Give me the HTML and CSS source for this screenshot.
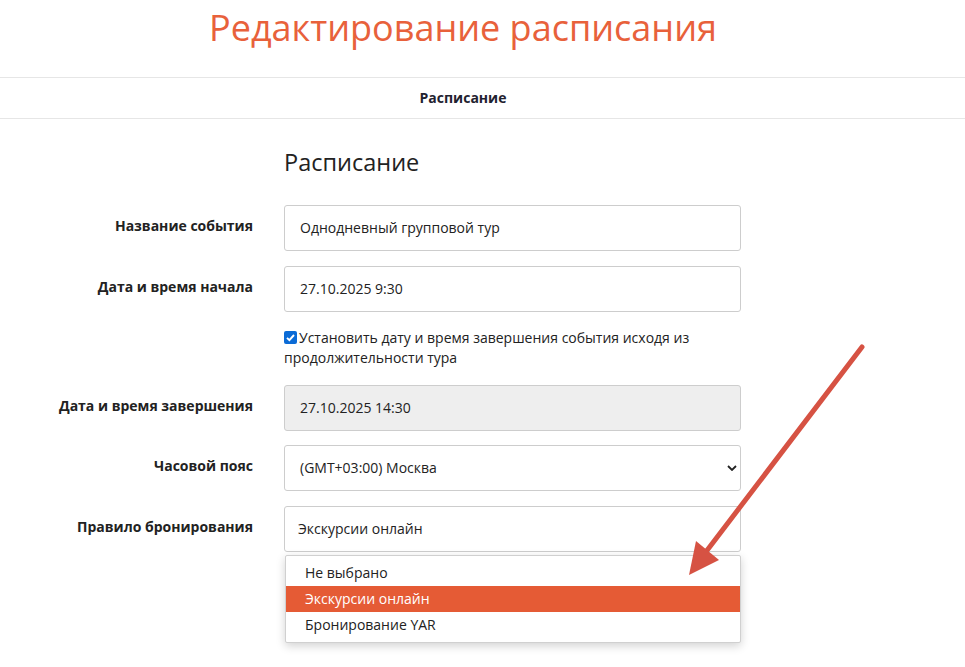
FILE: index.html
```html
<!DOCTYPE html>
<html lang="ru">
<head>
<meta charset="utf-8">
<title>Редактирование расписания</title>
<link rel="stylesheet" href="styles.css">
</head>
<body>
<div class="page">
  <h1 class="title">Редактирование расписания</h1>
  <nav class="tabs"><span class="tab">Расписание</span></nav>
  <section class="form">
    <h2 class="section-title">Расписание</h2>
    <div class="row">
      <label class="label">Название события</label>
      <div class="field">Однодневный групповой тур</div>
    </div>
    <div class="row">
      <label class="label">Дата и время начала</label>
      <div class="field">27.10.2025 9:30</div>
    </div>
    <div class="row">
      <span class="label"></span>
      <div class="check-text"><span class="checkbox"><svg viewBox="0 0 13 13" width="13" height="13"><rect x="0" y="0" width="13" height="13" rx="2" fill="#0b6bd6"/><path d="M3 6.8 L5.4 9.2 L10 4" fill="none" stroke="#fff" stroke-width="1.9"/></svg></span>Установить дату и время завершения события исходя из продолжительности тура</div>
    </div>
    <div class="row row-tight">
      <label class="label">Дата и время завершения</label>
      <div class="field disabled">27.10.2025 14:30</div>
    </div>
    <div class="row">
      <label class="label">Часовой пояс</label>
      <div class="field select tz"><span>(GMT+03:00) Москва</span><svg class="chev" viewBox="0 0 10 6" width="10" height="6"><path d="M1 1 L5 5 L9 1" fill="none" stroke="#222" stroke-width="1.8"/></svg></div>
    </div>
    <div class="row">
      <label class="label">Правило бронирования</label>
      <div class="select-wrap">
        <div class="field select rule"><span>Экскурсии онлайн</span><span class="tick"></span></div>
        <ul class="dropdown">
          <li>Не выбрано</li>
          <li class="active">Экскурсии онлайн</li>
          <li>Бронирование YAR</li>
        </ul>
      </div>
    </div>
  </section>
  <svg class="annot" width="965" height="667" viewBox="0 0 965 667">
    <line x1="862" y1="347" x2="702" y2="557" stroke="#d65243" stroke-width="5" stroke-linecap="round"/>
    <polygon points="689,575 696,541 719,560" fill="#d65243"/>
  </svg>
</div>
</body>
</html>
```
FILE: styles.css
```css
* { box-sizing: border-box; }
html, body { margin: 0; padding: 0; background: #fff; }
body {
  font-family: "Open Sans", "Noto Sans", sans-serif;
  color: #222;
  font-size: 14px;
}
.page { position: relative; width: 965px; height: 667px; overflow: hidden; }
.title {
  margin: 0;
  padding-top: 3px;
  height: 77px;
  text-align: center;
  font-weight: 400;
  font-size: 36px;
  line-height: 50px;
  color: #e8613b;
  padding-right: 39px;
}
.tabs {
  border-top: 1px solid #e6e6e6;
  border-bottom: 1px solid #e6e6e6;
  height: 42px;
  display: flex;
  justify-content: center;
  align-items: center;
  padding-right: 39px;
}
.tab { font-weight: 700; font-size: 14px; color: #1f2230; padding-bottom: 1px; }
.form { padding-top: 26px; }
.section-title {
  margin: 0 0 26px 284px;
  font-weight: 400;
  font-size: 23.5px;
  line-height: 34px;
  color: #222;
}
.row {
  display: grid;
  grid-template-columns: 253px 457px;
  column-gap: 31px;
  margin-bottom: 15px;
}
.row-tight { margin-bottom: 14px; }
.label {
  text-align: right;
  font-weight: 700;
  font-size: 14px;
  padding-top: 11px;
  color: #222;
}
.field {
  height: 46px;
  border: 1px solid #cdcdcd;
  border-radius: 3px;
  padding: 0 15px 2px;
  display: flex;
  align-items: center;
  font-size: 14px;
  color: #222;
  background: #fff;
}
.field.disabled { background: #eeeeee; }
.field.select { justify-content: space-between; padding-right: 3px; }
.field.tz { padding-left: 15px; }
.field.rule { padding-left: 13px; padding-right: 15px; }
.tick { width: 3px; height: 2px; background: #555; margin-top: 2px; }
.chev { flex: none; margin-top: 2px; }
.check-text { line-height: 20px; font-size: 14px; margin-top: 1px; margin-bottom: 2px; }
.checkbox { display: inline-block; vertical-align: -1px; margin-right: 2px; line-height: 0; }
.select-wrap { position: relative; }
.dropdown {
  position: absolute;
  left: 1px;
  top: 49px;
  width: 456px;
  margin: 0;
  padding: 4px 0 4px;
  list-style: none;
  background: #fff;
  border: 1px solid #d0d0d0;
  border-radius: 2px;
  box-shadow: 0 3px 10px rgba(0,0,0,0.18);
}
.dropdown li {
  height: 26px;
  line-height: 26px;
  padding-left: 19px;
  font-size: 14px;
  color: #222;
}
.dropdown li.active { background: #e55b35; color: #fff; }
.annot { position: absolute; left: 0; top: 0; pointer-events: none; }
```
